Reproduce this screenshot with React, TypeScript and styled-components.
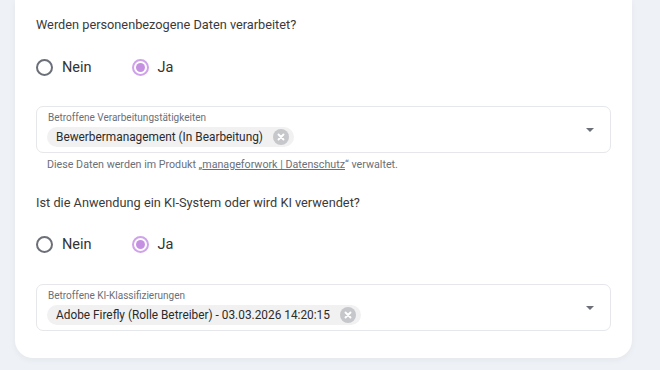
import React from "react";
import styled, { createGlobalStyle } from "styled-components";

const Global = createGlobalStyle`
  html, body { margin: 0; padding: 0; background: #eef1f5; }
  body { font-family: "Roboto", "Inter", "Noto Sans", sans-serif; color: #333; }
`;

const Page = styled.div`
  padding: 0 28px 12px 15px;
`;

const Card = styled.div`
  background: #fff;
  border-radius: 0 0 18px 18px;
  box-shadow: 0 2px 6px rgba(30, 40, 60, 0.05);
  padding: 16px 21px 27px 21px;
  display: flex;
  flex-direction: column;
`;

const Question = styled.div<{ $mt?: number }>`
  font-size: 12.75px;
  line-height: 18px;
  color: #3a3a3a;
  margin-top: ${(p) => p.$mt ?? 0}px;
`;

const RadioRow = styled.div<{ $mt: number }>`
  display: flex;
  align-items: center;
  gap: 40px;
  height: 24px;
  margin-top: ${(p) => p.$mt}px;
`;

const RadioItem = styled.label`
  display: flex;
  align-items: center;
  gap: 9px;
  font-size: 14.5px;
  color: #333;
`;

const Circle = styled.span<{ $checked?: boolean }>`
  box-sizing: border-box;
  width: 17px;
  height: 17px;
  border-radius: 50%;
  border: 2px solid ${(p) => (p.$checked ? "#cfa2ea" : "#6b6f78")};
  display: flex;
  align-items: center;
  justify-content: center;
  &::after {
    content: "";
    display: ${(p) => (p.$checked ? "block" : "none")};
    width: 9px;
    height: 9px;
    border-radius: 50%;
    background: #c690e2;
  }
`;

const Select = styled.div<{ $mt: number }>`
  box-sizing: border-box;
  height: 47px;
  border: 1px solid #e6e7ea;
  border-radius: 7px;
  padding: 5px 16px 5px 10px;
  display: flex;
  align-items: center;
  margin-top: ${(p) => p.$mt}px;
`;

const SelectBody = styled.div`
  flex: 1;
  display: flex;
  flex-direction: column;
  align-items: flex-start;
  gap: 3px;
`;

const SelectLabel = styled.div`
  font-size: 10px;
  line-height: 12px;
  color: #6b6f78;
  padding-left: 1px;
`;

const Chip = styled.div`
  display: flex;
  align-items: center;
  gap: 10px;
  height: 20px;
  background: #f1f1f2;
  border-radius: 10px;
  padding: 0 5px 0 9px;
  font-size: 11.85px;
  color: #2b2b2b;
`;

const ChipX = styled.span`
  width: 16px;
  height: 16px;
  border-radius: 50%;
  background: #c6c7ca;
  display: flex;
  align-items: center;
  justify-content: center;
`;

const Arrow = styled.span`
  width: 0;
  height: 0;
  border-left: 4px solid transparent;
  border-right: 4px solid transparent;
  border-top: 4px solid #6b6f78;
`;

const Helper = styled.div`
  font-size: 10.7px;
  line-height: 14px;
  color: #6b6f78;
  margin-top: 5px;
  padding-left: 11px;
  a {
    color: inherit;
    text-decoration: underline;
  }
`;

const XIcon = () => (
  <svg width="8" height="8" viewBox="0 0 8 8">
    <path d="M1.5 1.5 L6.5 6.5 M6.5 1.5 L1.5 6.5" stroke="#fff" strokeWidth="1.9" strokeLinecap="round" />
  </svg>
);

const Radios = ({ mt }: { mt: number }) => (
  <RadioRow $mt={mt}>
    <RadioItem>
      <Circle />
      Nein
    </RadioItem>
    <RadioItem>
      <Circle $checked />
      Ja
    </RadioItem>
  </RadioRow>
);

const SelectField = ({ mt, label, value }: { mt: number; label: string; value: string }) => (
  <Select $mt={mt}>
    <SelectBody>
      <SelectLabel>{label}</SelectLabel>
      <Chip>
        {value}
        <ChipX>
          <XIcon />
        </ChipX>
      </Chip>
    </SelectBody>
    <Arrow />
  </Select>
);

export default function App() {
  return (
    <>
      <Global />
      <Page>
        <Card>
          <Question>Werden personenbezogene Daten verarbeitet?</Question>
          <Radios mt={21} />
          <SelectField
            mt={27}
            label="Betroffene Verarbeitungstätigkeiten"
            value="Bewerbermanagement (In Bearbeitung)"
          />
          <Helper>
            Diese Daten werden im Produkt „<a href="#">manageforwork | Datenschutz</a>“ verwaltet.
          </Helper>
          <Question $mt={22}>Ist die Anwendung ein KI-System oder wird KI verwendet?</Question>
          <Radios mt={20} />
          <SelectField
            mt={28}
            label="Betroffene KI-Klassifizierungen"
            value="Adobe Firefly (Rolle Betreiber) - 03.03.2026 14:20:15"
          />
        </Card>
      </Page>
    </>
  );
}
